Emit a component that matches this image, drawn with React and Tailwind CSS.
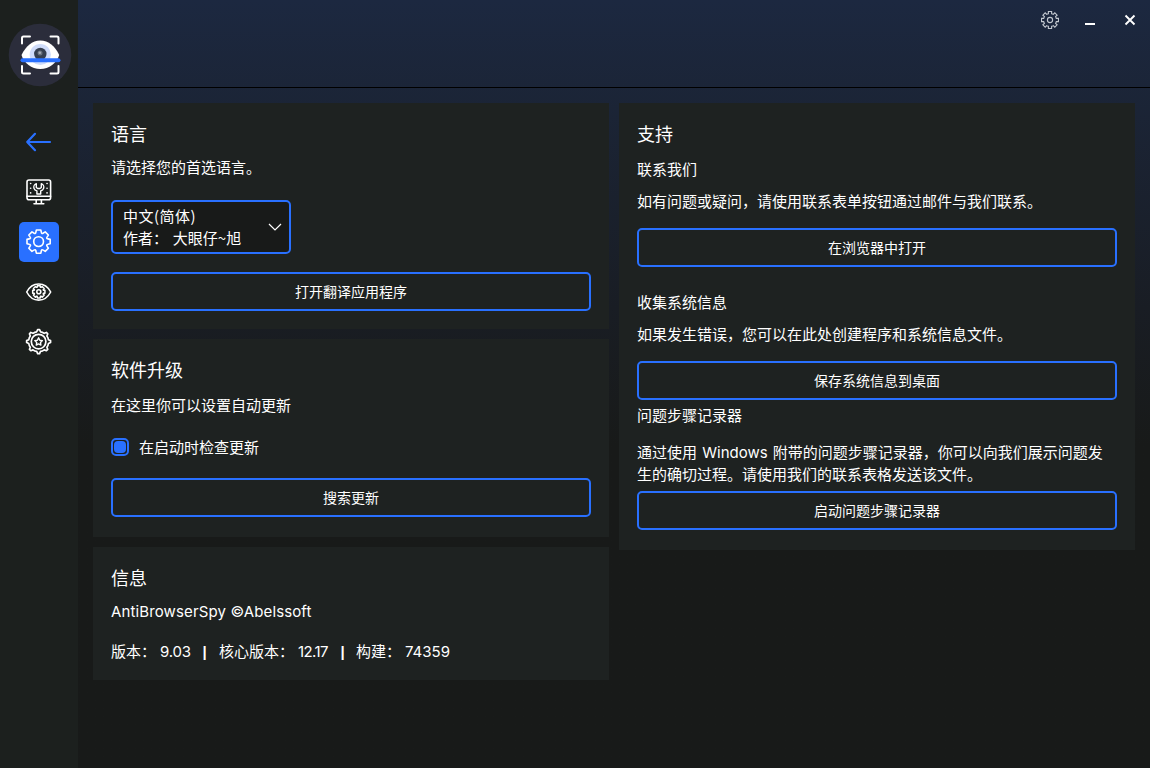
import React, { useState } from 'react';

// Outline of a cog: `teeth` tips at radius `outer`, valleys at radius `inner`
const gearPath = (c, outer, inner, teeth, tip, root, scoop) => {
  const pt = (r, a) => `${(c + r * Math.sin(a)).toFixed(2)} ${(c - r * Math.cos(a)).toFixed(2)}`;
  const step = (Math.PI * 2) / teeth;
  let d = '';
  for (let i = 0; i < teeth; i++) {
    const a = i * step;
    d += `${i === 0 ? 'M' : 'L'}${pt(inner, a - root)} L${pt(outer, a - tip)} L${pt(outer, a + tip)} L${pt(inner, a + root)} `;
    d += `Q${pt(scoop, a + step / 2)} ${pt(inner, a + step - root)} `;
  }
  return d + 'Z';
};

const Logo = () => (
  <svg className="h-16 w-16" viewBox="0 0 64 64" fill="none">
    <circle cx="32" cy="32" r="31.3" fill="#2b2d3b" />
    <path d="M14 20.500V15a1.500 1.500 0 0 1 1.500-1.500H22M42.500 13.500H49a1.500 1.500 0 0 1 1.500 1.500v5.500M14 43v6a1.500 1.500 0 0 0 1.500 1.500H22M42.500 50.500H49a1.500 1.500 0 0 0 1.500-1.500v-6" stroke="#fff" strokeWidth="2" strokeLinecap="round" />
    <path d="M13.500 32C18 23 24 17.500 32.300 17.500S47 23 51.200 32c-2.500 8-10 14-18.900 14S16 40 13.500 32Z" fill="#fff" />
    <circle cx="32.300" cy="31.500" r="10.600" fill="#cfdcfa" />
    <circle cx="32.300" cy="31" r="6.200" fill="#353f4f" />
    <circle cx="32" cy="30" r="2.500" fill="#67707d" />
    <circle cx="31.800" cy="29.700" r="1.300" fill="#a4abb4" />
    <path d="M14.500 37.200h36" stroke="#2970ff" strokeWidth="4" strokeLinecap="round" />
  </svg>
);

const BackIcon = () => (
  <svg className="h-7 w-7" viewBox="0 0 28 28" fill="none" stroke="#2970ff" strokeWidth="2.200" strokeLinecap="round" strokeLinejoin="round">
    <path d="M25 14H2.200M10 5.800 2.200 14l7.800 8.200" />
  </svg>
);

const MonitorIcon = () => (
  <svg className="h-7 w-7" viewBox="0 0 28 28" fill="none" stroke="#fff" strokeWidth="1.600" strokeLinecap="round" strokeLinejoin="round">
    <rect x="2" y="2" width="23.600" height="19.800" rx="2" />
    <path d="M2 18.300h23.600M11.200 21.800V25.600M16.400 21.800V25.600M9 25.800h9.800" />
    <path d="M11.300 5.700c-2.200.8-2.900 3-2.300 4.700.4 1.300 1.500 2.200 2.900 2.500v3.100h3.800v-3.100c1.400-.3 2.500-1.200 2.900-2.500.6-1.700-.1-3.900-2.300-4.700v3.800l-1.300 1h-2.400l-1.300-1Z" strokeWidth="1.400" />
    <path d="M5.600 5.500h.1M5.600 10.200h.1M5.600 14.900h.1M22 5.500h.1M22 10.200h.1M22 14.900h.1" />
  </svg>
);

const SettingsIcon = () => (
  <svg className="h-7 w-7" viewBox="0 0 28 28" fill="none" stroke="#fff" strokeWidth="1.600" strokeLinejoin="round">
    <path d={gearPath(13.600, 11.800, 9.800, 8, 0.190, 0.280, 7.900)} />
    <circle cx="13.600" cy="13.600" r="4.900" />
  </svg>
);

const EyeIcon = () => (
  <svg className="h-7 w-7" viewBox="0 0 28 28" fill="none" stroke="#fff" strokeWidth="1.600" strokeLinejoin="round">
    <path d="M1.700 14C4.500 8.600 8.700 6 13.700 6S22.900 8.600 25.700 14C22.900 19.400 18.700 22.100 13.700 22.100S4.500 19.400 1.700 14Z" />
    <path d={gearPath(13.800, 6.300, 5.100, 8, 0.230, 0.300, 4.600)} strokeWidth="1.500" />
    <circle cx="13.800" cy="13.800" r="2" />
  </svg>
);

const BadgeIcon = () => (
  <svg className="h-7 w-7" viewBox="0 0 28 28" fill="none" stroke="#fff" strokeWidth="1.700" strokeLinejoin="round">
    <path d={gearPath(13.600, 12, 10, 8, 0.080, 0.190, 10.400)} />
    <circle cx="13.600" cy="13.600" r="7.300" />
    <path d="m13.600 9.800 1.200 2.400 2.600.400-1.900 1.900.400 2.600-2.300-1.200-2.300 1.200.400-2.600-1.900-1.900 2.600-.400Z" strokeWidth="1.400" />
  </svg>
);

const navItems = [
  { id: 'back', icon: BackIcon },
  { id: 'tools', icon: MonitorIcon },
  { id: 'settings', icon: SettingsIcon },
  { id: 'privacy', icon: EyeIcon },
  { id: 'rating', icon: BadgeIcon },
];

const Card = ({ title, className, children }) => (
  <section className={`flex flex-col bg-[#1e2221] px-[18px] pt-[18px] ${className}`}>
    <h2 className="text-lg leading-6">{title}</h2>
    {children}
  </section>
);

const OutlineButton = ({ className, children }) => (
  <button type="button" className={`h-[39px] w-full shrink-0 rounded-[5px] border-2 border-[#2970ff] pb-0.5 text-sm leading-5 hover:bg-[#2970ff]/20 ${className}`}>
    {children}
  </button>
);

const Separator = () => <span className="-ml-px w-[5px] text-center font-['Liberation_Sans',sans-serif] font-bold">|</span>;

const App = () => {
  const [active, setActive] = useState('settings');
  const [autoCheck, setAutoCheck] = useState(true);

  return (
    <div className="flex h-screen w-full overflow-hidden bg-[#181a19] font-['Noto_Sans_CJK_SC',sans-serif] text-[15px] leading-[22px] text-white">
      <aside className="flex w-[78px] shrink-0 flex-col items-center bg-[#1c201e] pt-[23px]">
        <div className="ml-px">
          <Logo />
        </div>
        <nav className="mt-[35px] flex flex-col gap-2.5">
          {navItems.map(({ id, icon: Icon }) => (
            <button
              key={id}
              type="button"
              onClick={() => setActive(id)}
              className={`flex h-10 w-10 items-center justify-center rounded-[5px] ${active === id ? 'bg-[#2970ff]' : ''}`}
            >
              <Icon />
            </button>
          ))}
        </nav>
      </aside>

      <div className="flex flex-1 flex-col bg-linear-to-b from-[#1c2840] via-[#191d24] via-[40%] to-[#181a19] to-[58%]">
        <header className="flex h-[88px] shrink-0 items-start justify-end border-b border-black pt-2.5 pr-2.5">
          <button type="button" className="flex h-5 w-5 items-center justify-center">
            <svg className="h-5 w-5" viewBox="0 0 20 20" fill="none" stroke="#c3c8d0" strokeWidth="1.100">
              <path d={gearPath(10, 8.600, 6.500, 8, 0.190, 0.250, 6.600)} />
              <circle cx="10" cy="10" r="2.600" />
            </svg>
          </button>
          <button type="button" className="ml-5 flex h-5 w-5 items-center justify-center">
            <span className="mt-2 h-0.5 w-2.5 bg-white" />
          </button>
          <button type="button" className="ml-5 flex h-5 w-5 items-center justify-center">
            <svg className="h-5 w-5" viewBox="0 0 20 20" fill="none" stroke="#fff" strokeWidth="1.900">
              <path d="m5.500 5.500 9 9M14.500 5.500l-9 9" />
            </svg>
          </button>
        </header>

        <main className="flex items-start gap-2.5 px-[15px] pt-[15px]">
          <div className="flex w-[516px] flex-col gap-2.5">
            <Card title="语言" className="h-[226px]">
              <p className="mt-[11px]">请选择您的首选语言。</p>
              <button type="button" className="mt-[22px] flex h-[54px] w-[180px] items-center justify-between rounded-[5px] border-2 border-[#2970ff] bg-[#181a19] pr-[7px] pl-2.5 text-left">
                <span className="flex flex-col">
                  <span className="tracking-[0.5px]">中文(简体)</span>
                  <span className="[word-spacing:1.5px]">作者： 大眼仔~旭</span>
                </span>
                <svg className="h-3.5 w-3.5" viewBox="0 0 14 14" fill="none" stroke="#fff" strokeWidth="1.200">
                  <path d="m1 4 6 6 6-6" />
                </svg>
              </button>
              <OutlineButton className="mt-[18px]">打开翻译应用程序</OutlineButton>
            </Card>

            <Card title="软件升级" className="h-[198px]">
              <p className="mt-[13px]">在这里你可以设置自动更新</p>
              <label className="mt-5 flex items-center gap-2.5">
                <input type="checkbox" className="sr-only" checked={autoCheck} onChange={(e) => setAutoCheck(e.target.checked)} />
                <span className="flex h-[18px] w-[18px] items-center justify-center rounded-[5px] border-2 border-[#2970ff]">
                  {autoCheck && <span className="h-3 w-3 rounded-[4px] bg-[#2970ff]" />}
                </span>
                <span>在启动时检查更新</span>
              </label>
              <OutlineButton className="mt-5">搜索更新</OutlineButton>
            </Card>

            <Card title="信息" className="h-[133px]">
              <p className="mt-3 font-['Inter',sans-serif] tracking-[0.13px]">AntiBrowserSpy ©Abelssoft</p>
              <div className="mt-[18px] flex">
                <span className="-mt-px w-[49px]">版本：</span>
                <span className="w-[43px] font-['Inter',sans-serif] tracking-[-0.2px]">9.03</span>
                <Separator />
                <span className="-mt-px ml-3 w-[79px]">核心版本：</span>
                <span className="w-[43px] font-['Inter',sans-serif] tracking-[-0.6px]">12.17</span>
                <Separator />
                <span className="-mt-px ml-[11px] w-[49px]">构建：</span>
                <span className="font-['Inter',sans-serif]">74359</span>
              </div>
            </Card>
          </div>

          <Card title="支持" className="h-[447px] w-[516px]">
            <h3 className="mt-[13px]">联系我们</h3>
            <p className="mt-2.5">如有问题或疑问，请使用联系表单按钮通过邮件与我们联系。</p>
            <OutlineButton className="mt-4">在浏览器中打开</OutlineButton>
            <h3 className="mt-6">收集系统信息</h3>
            <p className="mt-2.5">如果发生错误，您可以在此处创建程序和系统信息文件。</p>
            <OutlineButton className="mt-4">保存系统信息到桌面</OutlineButton>
            <h3 className="mt-1">问题步骤记录器</h3>
            <p className="mt-4 pr-2 font-['Inter','Noto_Sans_CJK_SC',sans-serif] [word-spacing:1px]">
              通过使用 Windows 附带的问题步骤记录器，你可以向我们展示问题发生的确切过程。请使用我们的联系表格发送该文件。
            </p>
            <OutlineButton className="mt-[5px]">启动问题步骤记录器</OutlineButton>
          </Card>
        </main>
      </div>
    </div>
  );
};

export default App;
